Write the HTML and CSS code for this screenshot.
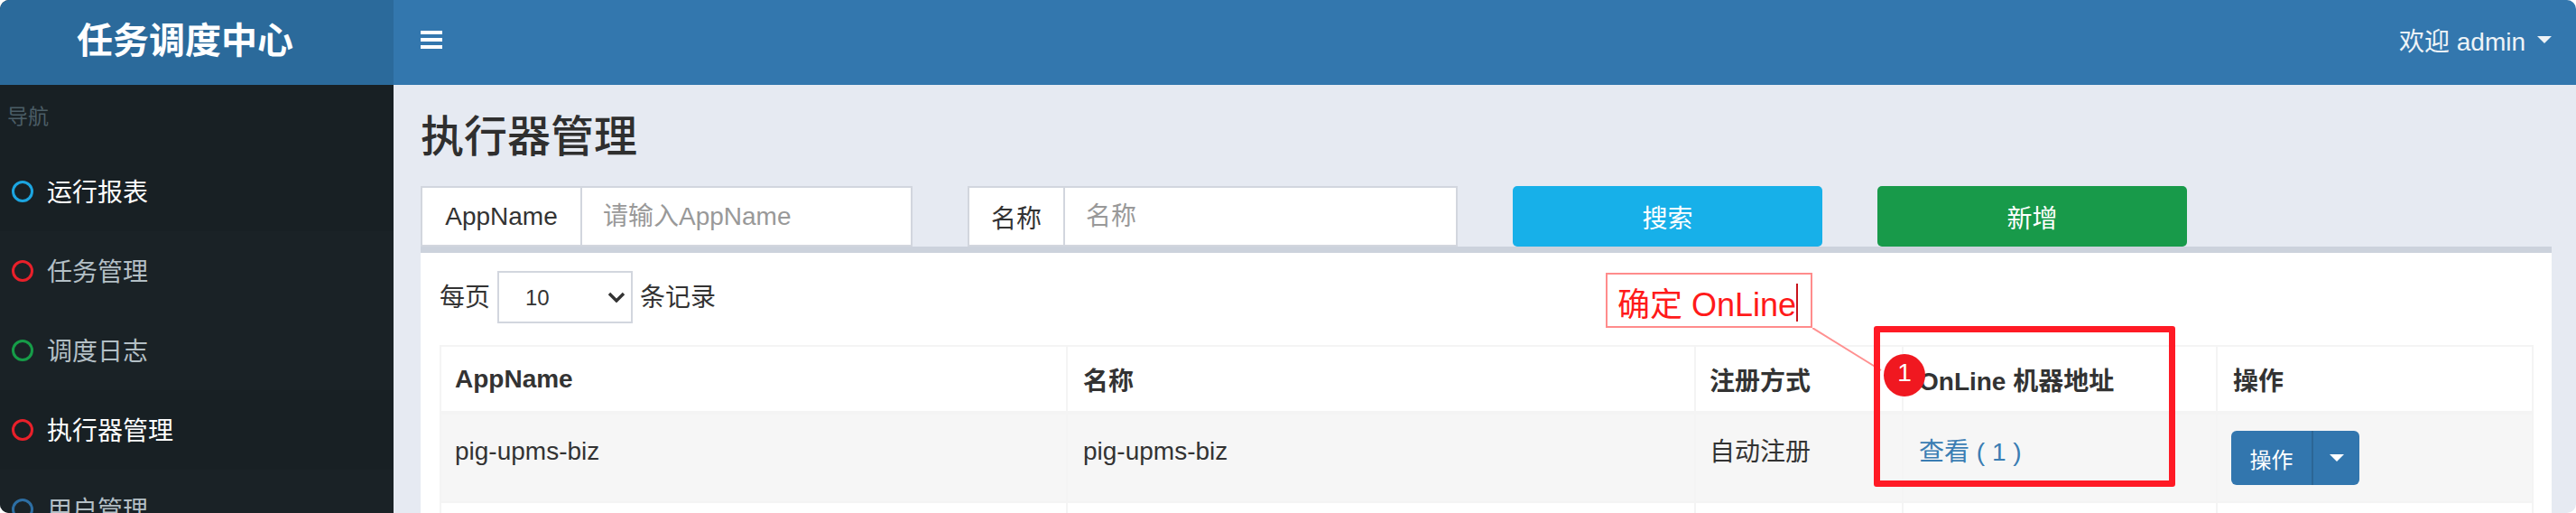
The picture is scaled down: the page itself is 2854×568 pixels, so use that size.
FILE: index.html
```html
<!DOCTYPE html>
<html lang="zh-CN">
<head>
    <meta charset="UTF-8">
    <title>任务调度中心</title>
    <link rel="stylesheet" href="styles.css">
</head>
<body>

    <div class="app">
        <aside class="sidebar">
            <div class="logo">任务调度中心</div>
            <div class="nav-label">导航</div>
            <ul class="nav-list">
                <li class="nav-item active"><span class="dot dot-aqua"></span>运行报表</li>
                <li class="nav-item"><span class="dot dot-red"></span>任务管理</li>
                <li class="nav-item"><span class="dot dot-green"></span>调度日志</li>
                <li class="nav-item active"><span class="dot dot-red"></span>执行器管理</li>
                <li class="nav-item"><span class="dot dot-blue"></span>用户管理</li>
            </ul>
        </aside>

        <main class="main">
            <header class="topbar">
                <div class="burger"><span></span><span></span><span></span></div>
                <div class="user">欢迎 admin<span class="caret"></span></div>
            </header>

            <section class="content">
                <h1>执行器管理</h1>

                <div class="filters">
                    <div class="input-group group-appname">
                        <span class="addon addon-appname">AppName</span>
                        <input class="field" type="text" placeholder="请输入AppName">
                    </div>
                    <div class="input-group group-title">
                        <span class="addon addon-title">名称</span>
                        <input class="field" type="text" placeholder="名称">
                    </div>
                    <button class="btn btn-search">搜索</button>
                    <button class="btn btn-add">新增</button>
                </div>

                <div class="box">
                    <div class="length-row">
                        <span>每页</span>
                        <div class="select-wrap">
                            <select class="length-select"><option>10</option></select>
                            <svg class="select-arrow" width="20" height="12" viewBox="0 0 20 12"><path d="M2 2l8 8 8-8" fill="none" stroke="#333" stroke-width="3.4"/></svg>
                        </div>
                        <span>条记录</span>
                    </div>

                    <table class="data-table">
                        <colgroup>
                            <col class="col-app"><col class="col-title"><col class="col-type"><col class="col-online"><col class="col-ops">
                        </colgroup>
                        <thead>
                            <tr>
                                <th>AppName</th>
                                <th>名称</th>
                                <th>注册方式</th>
                                <th>OnLine 机器地址</th>
                                <th>操作</th>
                            </tr>
                        </thead>
                        <tbody>
                            <tr class="stripe">
                                <td>pig-upms-biz</td>
                                <td>pig-upms-biz</td>
                                <td class="cell-raised">自动注册</td>
                                <td class="cell-raised"><a class="link">查看 ( 1 )</a></td>
                                <td>
                                    <div class="btn-split">
                                        <span class="split-main">操作</span>
                                        <span class="split-toggle"><span class="caret"></span></span>
                                    </div>
                                </td>
                            </tr>
                            <tr class="blank"><td></td><td></td><td></td><td></td><td></td></tr>
                        </tbody>
                    </table>
                </div>
            </section>
        </main>

        <!-- annotation drawn over the screenshot -->
        <div class="note">确定 OnLine<span class="note-cursor"></span></div>
        <svg class="note-line" width="90" height="60" viewBox="0 0 90 60"><path d="M0 0L76 47" stroke="#ff9090" stroke-width="2"/></svg>
        <div class="mark-box"></div>
        <div class="mark-num">1</div>
    </div>

</body>
</html>
```

FILE: styles.css
```css
* {
    box-sizing: border-box;
    margin: 0;
    padding: 0;
}

body {
    background: #fff;
    font-family: "Liberation Sans", "Noto Sans CJK SC", sans-serif;
    font-size: 28px;
    color: #333;
}

.app {
    position: relative;
    display: flex;
    height: 568px;
    overflow: hidden;
    border-radius: 10px;
}

/* Sidebar */
.sidebar {
    width: 436px;
    flex-shrink: 0;
    background: #182024;
}

.logo {
    height: 94px;
    line-height: 90px;
    text-align: center;
    font-size: 40px;
    font-weight: 700;
    color: #fff;
    background: #2b6a9b;
    padding-right: 26px;
}

.nav-label {
    height: 74px;
    line-height: 70px;
    padding-left: 8px;
    font-size: 23px;
    color: #4b5d66;
}

.nav-list {
    list-style: none;
}

.nav-item {
    display: flex;
    align-items: center;
    height: 88px;
    padding-left: 13px;
    padding-bottom: 3px;
    color: #b3bfc5;
    background: #1a2226;
}

.nav-item.active {
    color: #fff;
    background: #182024;
}

.dot {
    width: 24px;
    height: 24px;
    margin-top: 3px;
    margin-right: 15px;
    border: 3px solid;
    border-radius: 50%;
}

.dot-aqua { color: #1ca5e0; }
.dot-red { color: #e8202a; }
.dot-green { color: #169c48; }
.dot-blue { color: #2d6ea3; }

/* Top bar */
.main {
    flex: 1;
    background: #e6eaf2;
}

.topbar {
    display: flex;
    align-items: center;
    justify-content: space-between;
    height: 94px;
    padding: 0 29px 6px 30px;
    background: #3377ae;
    color: #fff;
}

.burger {
    display: flex;
    flex-direction: column;
    gap: 4px;
    width: 24px;
}

.burger span {
    height: 4px;
    background: #fff;
}

.user {
    display: flex;
    align-items: center;
    color: #eef3f7;
}

.caret {
    width: 0;
    height: 0;
    border-top: 8px solid;
    border-left: 8px solid transparent;
    border-right: 8px solid transparent;
}

.user .caret {
    margin-left: 13px;
}

/* Content */
.content {
    padding: 0 29px 0 30px;
}

h1 {
    height: 112px;
    padding-top: 27px;
    font-size: 48px;
    line-height: 62px;
    font-weight: 500;
    color: #2f2f2f;
}

.filters {
    display: flex;
    gap: 61px;
    height: 67px;
}

.input-group {
    display: flex;
}

.group-appname { width: 545px; }
.group-title { width: 543px; }

.addon {
    display: flex;
    align-items: center;
    justify-content: center;
    flex-shrink: 0;
    background: #fff;
    border: 2px solid #d2d6de;
    border-right: 0;
}

.addon-appname { width: 177px; }
.addon-title { width: 106px; }

.field {
    flex: 1;
    min-width: 0;
    padding: 0 23px;
    font: inherit;
    background: #fff;
    border: 2px solid #d2d6de;
    border-radius: 0;
    outline: 0;
}

.field::placeholder {
    color: #999;
}

.btn {
    width: 343px;
    font: inherit;
    color: #fff;
    border: 0;
    border-radius: 5px;
}

.btn-search { background: #17b0e9; }
.btn-add { background: #189a4a; }

/* Box with table */
.box {
    height: 300px;
    padding: 20px 20px 0 21px;
    background: #fff;
    border-top: 7px solid #ccd2dc;
}

.length-row {
    display: flex;
    align-items: center;
    gap: 8px;
    height: 58px;
    margin-bottom: 24px;
}

.length-row span {
    padding-bottom: 4px;
}

.select-wrap {
    position: relative;
    width: 150px;
    height: 58px;
}

.length-select {
    width: 100%;
    height: 100%;
    padding-left: 29px;
    font: inherit;
    font-size: 24px;
    color: #333;
    background: #fff;
    border: 2px solid #d2d6de;
    border-radius: 0;
    appearance: none;
}

.select-arrow {
    position: absolute;
    top: 23px;
    right: 8px;
}

.data-table {
    width: 2318px;
    table-layout: fixed;
    border-collapse: collapse;
    border: 2px solid #f4f4f4;
}

.col-app { width: 694px; }
.col-title { width: 696px; }
.col-type { width: 230px; }
.col-online { width: 348px; }
.col-ops { width: 350px; }

.data-table th,
.data-table td {
    padding: 0 17px;
    text-align: left;
    border: 2px solid #f4f4f4;
}

.data-table th:first-child,
.data-table td:first-child,
.data-table th:nth-child(3),
.data-table td:nth-child(3) {
    padding-left: 15px;
}

.data-table th {
    height: 74px;
    font-weight: 700;
    color: #333;
    border-bottom-width: 4px;
}

.stripe td {
    height: 99px;
    background: #f6f6f6;
    padding-bottom: 14px;
}

.stripe td.cell-raised {
    padding-bottom: 18px;
}

.stripe td:last-child {
    padding-bottom: 0;
}

.blank td {
    height: 60px;
}

.link {
    color: #3a7db3;
}

.btn-split {
    display: flex;
    width: 142px;
    height: 60px;
    margin-left: -2px;
    color: #fff;
    font-size: 24px;
    background: #3276ae;
    border-radius: 6px;
}

.split-main {
    display: flex;
    align-items: center;
    justify-content: center;
    width: 91px;
    border-right: 2px solid #2c6695;
}

.split-toggle {
    display: flex;
    flex: 1;
    align-items: center;
    justify-content: center;
}

/* Annotation layer */
.note {
    position: absolute;
    left: 1779px;
    top: 302px;
    display: flex;
    align-items: center;
    width: 229px;
    height: 61px;
    padding: 2px 0 0 11px;
    font-size: 36px;
    color: #ff1a1a;
    white-space: nowrap;
    border: 2px solid #ff8c8c;
}

.note-cursor {
    position: absolute;
    left: 209px;
    top: 10px;
    width: 2px;
    height: 42px;
    background: #c8141c;
}

.note-line {
    position: absolute;
    left: 2008px;
    top: 363px;
}

.mark-box {
    position: absolute;
    left: 2076px;
    top: 361px;
    width: 334px;
    height: 178px;
    border: 7px solid #ff1a25;
    border-radius: 3px;
}

.mark-num {
    position: absolute;
    left: 2087px;
    top: 392px;
    display: flex;
    align-items: center;
    justify-content: center;
    width: 46px;
    height: 47px;
    padding-bottom: 6px;
    font-size: 28px;
    color: #fff;
    background: #f01820;
    border-radius: 50%;
}
```
